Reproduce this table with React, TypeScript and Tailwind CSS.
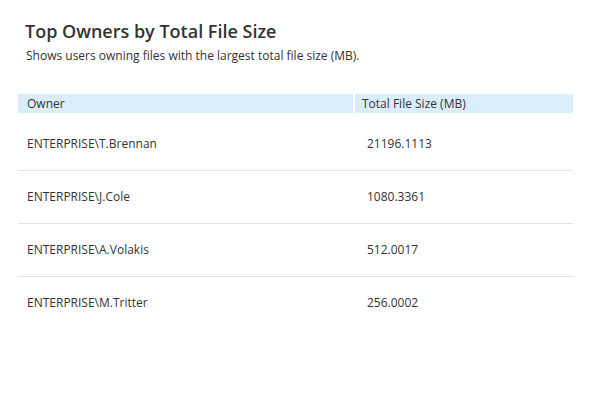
const rows = [
  { owner: "ENTERPRISE\\T.Brennan", size: "21196.1113" },
  { owner: "ENTERPRISE\\J.Cole", size: "1080.3361" },
  { owner: "ENTERPRISE\\A.Volakis", size: "512.0017" },
  { owner: "ENTERPRISE\\M.Tritter", size: "256.0002" },
];

export default function App() {
  return (
    <div
      className="w-[590px] h-[395px] bg-white text-[#333333] overflow-hidden"
      style={{ fontFamily: '"Open Sans", "Liberation Sans", sans-serif' }}
    >
      <div className="pt-[19px] pl-[25px]">
        <h1 className="text-[18px] leading-6 font-semibold">Top Owners by Total File Size</h1>
        <p className="mt-[5px] pl-px text-[12px] leading-4">
          Shows users owning files with the largest total file size (MB).
        </p>
      </div>

      <div className="mt-[30px] mx-[18px] w-[555px] text-[12px]">
        <div className="flex gap-[2px] h-[19px] items-center">
          <div className="w-[335px] h-full flex items-center pl-[9px] bg-[#daeefa]">Owner</div>
          <div className="flex-1 h-full flex items-center pl-[7px] bg-[#daeefa]">Total File Size (MB)</div>
        </div>
        <div className="pt-[4px]">
          {rows.map((r, i) => (
            <div
              key={r.owner}
              className={`flex items-center h-[53px] ${i > 0 ? "border-t border-[#e3e3e3]" : ""}`}
            >
              <div className="w-[337px] pl-[9px]">{r.owner}</div>
              <div className="flex-1 pl-[12px]">{r.size}</div>
            </div>
          ))}
        </div>
      </div>
    </div>
  );
}
